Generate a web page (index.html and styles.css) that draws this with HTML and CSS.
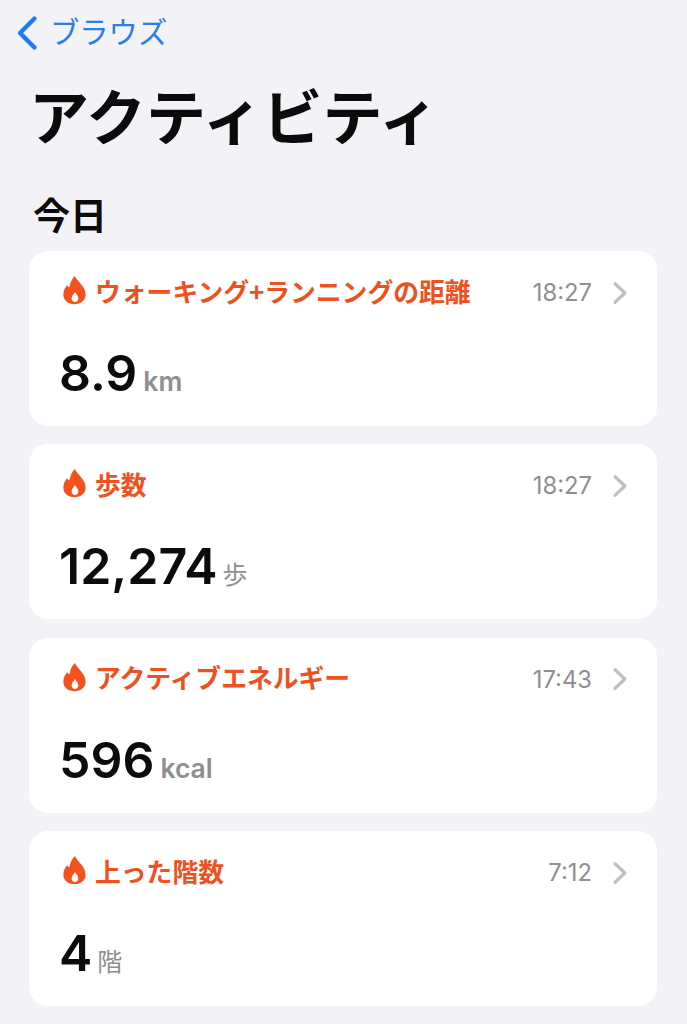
FILE: index.html
```html
<!DOCTYPE html>
<html lang="ja">
<head>
    <meta charset="UTF-8">
    <meta name="viewport" content="width=device-width, initial-scale=1.0">
    <title>アクティビティ</title>
    <link rel="stylesheet" href="styles.css">
</head>
<body>
    <svg class="defs" width="0" height="0">
        <symbol id="flame" viewBox="0 0 24 30">
            <path fill-rule="evenodd" d="M12.5 0.5C14 5.5 23.6 11 23.6 20C23.6 26 18.5 29.8 12 29.8C5.5 29.8 0.4 26 0.4 20C0.4 15.5 2.2 12.5 4.2 10C4.8 11 5.6 11.8 6.8 12.2C7.5 7.5 9.2 3.5 12.5 0.5ZM12.5 17C10.8 19.5 9 21.2 9 23.8C9 26 10.5 27.5 12.5 27.5C14.5 27.5 16 26 16 23.8C16 21.2 14.2 19.5 12.5 17Z"/>
        </symbol>
        <symbol id="chevron" viewBox="0 0 14 22">
            <path d="M2.5 2.5L11.5 11L2.5 19.5" fill="none" stroke-width="3" stroke-linecap="round" stroke-linejoin="round"/>
        </symbol>
    </svg>

    <nav class="nav">
        <svg class="back-icon" viewBox="0 0 22 36"><path d="M18.5 3.5L4 18L18.5 32.5" fill="none" stroke="#1a7cf0" stroke-width="4.4" stroke-linecap="round" stroke-linejoin="round"/></svg>
        <span class="back-label">ブラウズ</span>
    </nav>

    <h1 class="title">アクティビティ</h1>
    <h2 class="section">今日</h2>

    <div class="cards">
        <div class="card">
            <div class="card-head">
                <svg class="flame"><use href="#flame"/></svg>
                <span class="label">ウォーキング+ランニングの距離</span>
                <span class="time">18:27</span>
                <svg class="chevron"><use href="#chevron"/></svg>
            </div>
            <div class="reading"><span class="value">8.9</span><span class="unit">km</span></div>
        </div>
        <div class="card">
            <div class="card-head">
                <svg class="flame"><use href="#flame"/></svg>
                <span class="label">歩数</span>
                <span class="time">18:27</span>
                <svg class="chevron"><use href="#chevron"/></svg>
            </div>
            <div class="reading"><span class="value">12,274</span><span class="unit unit-ja">歩</span></div>
        </div>
        <div class="card">
            <div class="card-head">
                <svg class="flame"><use href="#flame"/></svg>
                <span class="label">アクティブエネルギー</span>
                <span class="time">17:43</span>
                <svg class="chevron"><use href="#chevron"/></svg>
            </div>
            <div class="reading"><span class="value">596</span><span class="unit">kcal</span></div>
        </div>
        <div class="card">
            <div class="card-head">
                <svg class="flame"><use href="#flame"/></svg>
                <span class="label">上った階数</span>
                <span class="time">7:12</span>
                <svg class="chevron"><use href="#chevron"/></svg>
            </div>
            <div class="reading"><span class="value">4</span><span class="unit unit-ja">階</span></div>
        </div>
    </div>
</body>
</html>
```

FILE: styles.css
```css
html, body {
    height: 1024px;
    overflow: hidden;
}
body {
    margin: 0;
    background-color: #f2f2f7;
    color: #0b0b0c;
    font-family: Inter, "Noto Sans CJK JP", sans-serif;
}
.defs {
    display: block;
    height: 0;
}
.nav {
    display: flex;
    align-items: center;
    gap: 12px;
    height: 36px;
    padding: 15px 0 0 16px;
}
.back-icon {
    width: 22px;
    height: 36px;
}
.back-label {
    font-size: 29.3px;
    line-height: 36px;
    color: #2a7fe0;
}
.title {
    margin: 21px 0 0 29px;
    font-size: 60px;
    line-height: 84px;
    font-weight: 700;
    font-family: "Noto Sans CJK JP", sans-serif;
}
.section {
    margin: 32px 0 0 33px;
    font-size: 37px;
    line-height: 52px;
    font-weight: 700;
    font-family: "Noto Sans CJK JP", sans-serif;
}
.cards {
    display: flex;
    flex-direction: column;
    gap: 18.4px;
    margin: 11px 30px 0 29px;
}
.card {
    height: 175px;
    box-sizing: border-box;
    padding: 20px 29px 0 34px;
    background-color: #fff;
    border-radius: 19px;
}
.card-head {
    display: flex;
    align-items: center;
    height: 38px;
}
.flame {
    flex: none;
    width: 23px;
    height: 30px;
    fill: #f4511e;
    margin-right: 9px;
}
.label {
    flex: 1;
    font-size: 25.8px;
    font-weight: 700;
    color: #ee5120;
    font-family: "Noto Sans CJK JP", sans-serif;
    white-space: nowrap;
}
.time {
    font-size: 23.8px;
    color: #8e8e93;
    margin-top: 5px;
    margin-right: 20px;
}
.chevron {
    flex: none;
    width: 16px;
    height: 24px;
    margin-top: 5px;
    stroke: #c0c0c4;
}
.reading {
    display: flex;
    align-items: baseline;
    margin-top: 34px;
    margin-left: -4px;
}
.value {
    font-size: 50px;
    line-height: 60px;
    font-weight: 600;
}
.unit {
    margin-left: 6px;
    font-size: 26.5px;
    font-weight: 600;
    color: #8e8e93;
}
.unit-ja {
    margin-left: 5px;
    font-size: 25px;
    font-weight: 400;
}
```
